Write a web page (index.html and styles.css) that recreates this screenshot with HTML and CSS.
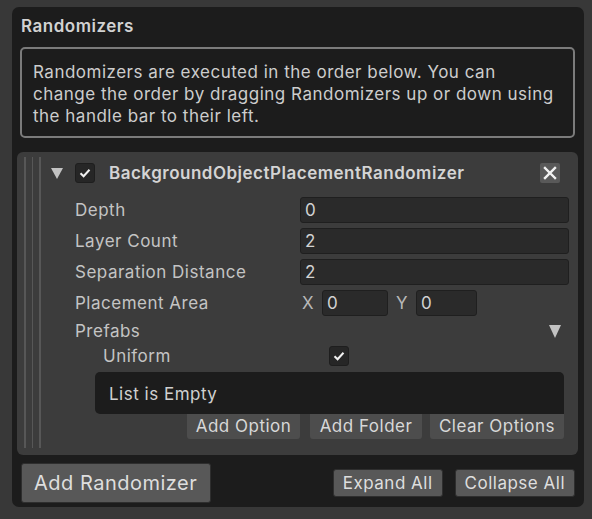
FILE: index.html
```html
<!DOCTYPE html>
<html>
<head>
<meta charset="utf-8">
<link rel="stylesheet" href="styles.css">
</head>
<body>
<div class="panel">
  <div class="title">Randomizers</div>
  <div class="info">Randomizers are executed in the order below. You can change the order by dragging Randomizers up or down using the handle bar to their left.</div>
  <div class="card">
    <div class="handle"><span></span><span></span><span></span></div>
    <div class="content">
      <div class="header">
        <span class="tri"></span>
        <span class="check"><svg width="12" height="10" viewBox="0 0 12 10"><path d="M1.5 5.2 L4.6 8.2 L10.5 1.8" fill="none" stroke="#f0f0f0" stroke-width="2"/></svg></span>
        <span class="name">BackgroundObjectPlacementRandomizer</span>
        <span class="close"><svg width="14" height="14" viewBox="0 0 14 14"><path d="M2 2 L12 12 M12 2 L2 12" stroke="#f2f2f2" stroke-width="2.4" stroke-linecap="square"/></svg></span>
      </div>
      <div class="row"><span class="label">Depth</span><span class="field">0</span></div>
      <div class="row"><span class="label">Layer Count</span><span class="field">2</span></div>
      <div class="row"><span class="label">Separation Distance</span><span class="field">2</span></div>
      <div class="row"><span class="label">Placement Area</span>
        <div class="xy"><span class="axis">X</span><span class="field fx">0</span><span class="axis ay">Y</span><span class="field fy">0</span></div>
      </div>
      <div class="prefabs"><span class="label">Prefabs</span><span class="tri small"></span></div>
      <div class="uniform"><span class="label">Uniform</span><span class="check"><svg width="12" height="10" viewBox="0 0 12 10"><path d="M1.5 5.2 L4.6 8.2 L10.5 1.8" fill="none" stroke="#f0f0f0" stroke-width="2"/></svg></span></div>
      <div class="list">List is Empty</div>
      <div class="listbtns"><span class="lbtn opt">Add Option</span><span class="lbtn fold">Add Folder</span><span class="lbtn clr">Clear Options</span></div>
    </div>
  </div>
  <div class="footer">
    <span class="btn big">Add Randomizer</span>
    <div class="right"><span class="btn">Expand All</span><span class="btn">Collapse All</span></div>
  </div>
</div>
</body>
</html>
```
FILE: styles.css
```css
* { box-sizing: border-box; }
html, body { margin: 0; }
body {
  background: #383838;
  width: 592px;
  height: 519px;
  padding: 7px 8px 0 12px;
  font-family: Inter, "Noto Sans", sans-serif;
  font-size: 17px;
  letter-spacing: 0.5px;
  color: #c8c8c8;
  overflow: hidden;
}
.panel {
  width: 572px;
  height: 500px;
  background: #1c1c1c;
  border-radius: 7px;
  padding: 9px 6px 0 5px;
  display: flex;
  flex-direction: column;
}
.title {
  font-weight: 600;
  font-size: 17px;
  color: #d2d2d2;
  padding-left: 4px;
  height: 31px;
  line-height: 20px;
}
.info {
  margin: 0 3px 14px 3px;
  height: 91px;
  border: 2px solid #7b7b7b;
  border-radius: 5px;
  padding: 12px 14px 0 11px;
  font-size: 17px;
  line-height: 22px;
  color: #cdcdcd;
}
.card {
  height: 303px;
  background: #3c3c3c;
  border-radius: 6px;
  display: flex;
}
.handle {
  width: 28px;
  display: flex;
  gap: 6px;
  padding: 5px 0 7px 7px;
}
.handle span {
  width: 1.5px;
  background: #575757;
}
.content {
  flex: 1;
  padding: 10px 9px 0 6px;
  display: flex;
  flex-direction: column;
}
.header {
  display: flex;
  align-items: center;
  height: 22px;
  margin-bottom: 13px;
}
.tri {
  width: 0; height: 0;
  border-left: 6px solid transparent;
  border-right: 6px solid transparent;
  border-top: 11px solid #c2c2c2;
  margin-right: 12px;
}
.check {
  width: 20px; height: 20px;
  background: #262626;
  border: 1px solid #1e1e1e;
  border-radius: 3px;
  display: flex; align-items: center; justify-content: center;
  flex-shrink: 0;
}
.name {
  font-weight: 600;
  font-size: 17px;
  color: #d4d4d4;
  margin-left: 14px;
  flex: 1;
  white-space: nowrap;
}
.close {
  width: 20px; height: 20px;
  background: #595959;
  border-radius: 2px;
  display: flex; align-items: center; justify-content: center;
  margin-right: 9px;
  flex-shrink: 0;
}
.row {
  display: flex;
  align-items: center;
  height: 26px;
  margin-bottom: 5px;
}
.label {
  color: #c4c4c4;
  padding-left: 24px;
  width: 249px;
  flex-shrink: 0;
  white-space: nowrap;
}
.field {
  flex: 1;
  height: 26px;
  background: #2a2a2a;
  border: 1px solid #1f1f1f;
  border-radius: 3px;
  color: #d2d2d2;
  padding-left: 4px;
  line-height: 24px;
}
.xy {
  display: flex;
  align-items: center;
  flex: 1;
}
.axis { color: #b8b8b8; margin-left: 2px; width: 20px; }
.ay { margin-left: 8px; }
.fx { flex: 0 0 66px; }
.fy { flex: 0 0 61px; }
.prefabs {
  display: flex;
  align-items: center;
  justify-content: space-between;
  height: 20px;
  margin-top: 0;
}
.tri.small { margin-right: 8px; border-left-width: 6px; border-right-width: 6px; border-top-width: 13px; }
.uniform {
  display: flex;
  align-items: center;
  height: 20px;
  margin-top: 5px;
}
.uniform .label { padding-left: 52px; width: 278px; }
.list {
  margin: 6px 5px 0 44px;
  height: 42px;
  background: #1c1c1c;
  border-radius: 5px 5px 0 5px;
  color: #d0d0d0;
  padding-left: 14px;
  line-height: 44px;
}
.listbtns {
  display: flex;
  justify-content: flex-end;
  margin-right: 5px;
}
.lbtn {
  height: 25px;
  background: #4d4d4d;
  border-radius: 0 0 3px 3px;
  color: #d8d8d8;
  text-align: center;
  line-height: 25px;
}
.opt { width: 113px; }
.fold { width: 112px; margin-left: 10px; }
.clr { width: 134px; margin-left: 8px; }
.footer {
  display: flex;
  justify-content: space-between;
  align-items: center;
  padding: 8px 3px 0 4px;
}
.right { display: flex; gap: 12px; }
.btn {
  height: 28px;
  background: #585858;
  border: 1px solid #2e2e2e;
  border-radius: 3px;
  color: #dedede;
  padding: 0 9px;
  line-height: 26px;
}
.btn.big {
  height: 40px;
  font-size: 20px;
  line-height: 38px;
  padding: 0 12px;
  width: 190px;
}
```
